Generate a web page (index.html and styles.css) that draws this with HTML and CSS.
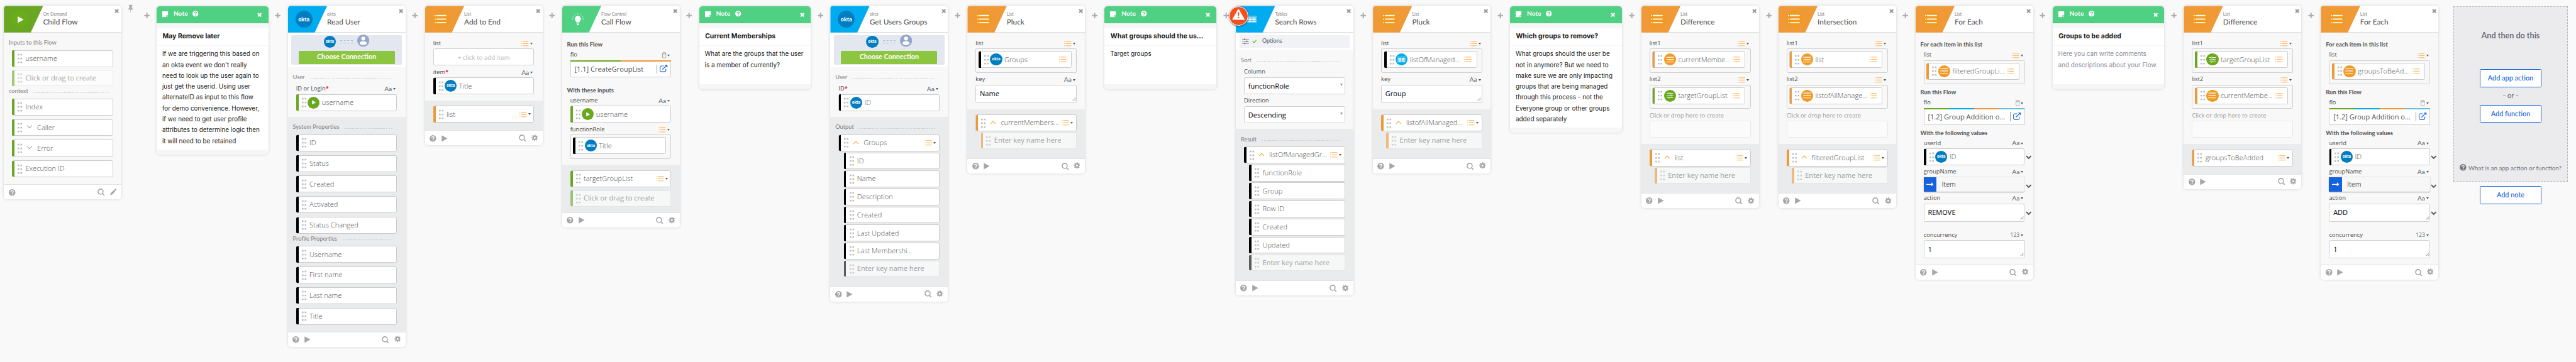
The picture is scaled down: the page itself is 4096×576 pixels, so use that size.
FILE: index.html
```html
<!DOCTYPE html>
<html lang="en">
<head>
<meta charset="utf-8">
<title>Flow editor</title>
<link rel="stylesheet" href="styles.css">
</head>
<body>
<svg class="defs" aria-hidden="true">
  <symbol id="x" viewBox="0 0 10 10"><path d="M1.4 1.4l7.2 7.2M8.6 1.4L1.4 8.6" stroke="currentColor" stroke-width="2.9"/></symbol>
  <symbol id="plus" viewBox="0 0 12 12"><path d="M6 .5v11M.5 6h11" stroke="currentColor" stroke-width="2.6"/></symbol>
  <symbol id="pin" viewBox="0 0 12 17"><path d="M2.4.5h7.2v1.6l-1 .6v4.600c1.600.6 2.900 1.500 2.900 3H.5c0-1.500 1.300-2.400 2.900-3V2.700l-1-.6zM5.400 10.500h1.200L6.200 16h-.4z" fill="currentColor"/></symbol>
  <symbol id="list" viewBox="0 0 15 11"><path d="M0 1h1.600M0 5.500h1.600M0 10h1.600M3 1h11.500M3 5.500h11.500M3 10h11.500" stroke="currentColor" stroke-width="1.200"/></symbol>
  <symbol id="biglist" viewBox="0 0 24 18"><path d="M4.500 2h17.500M4.500 9h17.500M4.500 16h17.500" stroke="#fff" stroke-width="2" stroke-linecap="round"/><circle cx="1.200" cy="2" r="1.200" fill="#fff"/><circle cx="1.200" cy="9" r="1.200" fill="#fff"/><circle cx="1.200" cy="16" r="1.200" fill="#fff"/></symbol>
  <symbol id="play" viewBox="0 0 12 13"><path d="M.3.3L11.700 6.500.3 12.700z" fill="currentColor"/></symbol>
  <symbol id="help" viewBox="0 0 13 13"><circle cx="6.500" cy="6.500" r="6.500" fill="currentColor"/><path d="M4.300 5.100c0-3 4.500-2.900 4.500-.2 0 1.500-2 1.500-2 3.100M6.800 9v1.700" fill="none" stroke="var(--hole,#fff)" stroke-width="1.700"/></symbol>
  <symbol id="search" viewBox="0 0 14 14"><circle cx="6" cy="6" r="4.900" fill="none" stroke="currentColor" stroke-width="1.900"/><path d="M9.600 9.600l3.600 3.600" stroke="currentColor" stroke-width="2.100"/></symbol>
  <symbol id="gear" viewBox="0 0 14 14"><circle cx="7" cy="7" r="3.500" fill="none" stroke="currentColor" stroke-width="2.900"/><circle cx="7" cy="7" r="5.700" fill="none" stroke="currentColor" stroke-width="2.200" stroke-dasharray="2.300 2.177" stroke-dashoffset="1.150"/></symbol>
  <symbol id="pencil" viewBox="0 0 14 14"><path d="M.5 13.500l.8-3.600 6.800-6.800 2.800 2.800-6.800 6.800zM9 2.200L10.500.7c.5-.5 1-.4 1.500 0L13.300 2c.5.5.4 1 0 1.500L11.800 5z" fill="currentColor"/></symbol>
  <symbol id="up" viewBox="0 0 13 8"><path d="M1 7l5.500-5.500L12 7" fill="none" stroke="currentColor" stroke-width="1.500"/></symbol>
  <symbol id="down" viewBox="0 0 13 8"><path d="M1 1l5.500 5.500L12 1" fill="none" stroke="currentColor" stroke-width="1.500"/></symbol>
  <symbol id="thick" viewBox="0 0 12 8"><path d="M1.200 1.200L6 6l4.800-4.800" fill="none" stroke="#555" stroke-width="2.400"/></symbol>
  <symbol id="note" viewBox="0 0 12 12"><path d="M0 0h12v8H8v4H0zM9 9h3l-3 3z" fill="#fff"/></symbol>
  <symbol id="bulb" viewBox="0 0 24 25"><path d="M12 6.500a5.900 5.900 0 0 1 5.900 5.900c0 3.200-2.600 4-3.100 6.600H9.200c-.5-2.600-3.100-3.400-3.100-6.600A5.900 5.900 0 0 1 12 6.500zM9.400 20h5.200v1.300H9.400zM9.800 22.100h4.400v1.100l-1.400 1.400h-1.600l-1.400-1.400z" fill="#fff"/><path d="M12 1v2.700M5.400 3.600l1.700 2M18.600 3.600l-1.700 2M.5 12.200h2.800M20.700 12.200h2.800M1.700 7.300l1.600.7M22.300 7.300l-1.600.7" stroke="#fff" stroke-width="1"/></symbol>
  <symbol id="person" viewBox="0 0 24 24"><circle cx="12" cy="12" r="12" fill="#94a6c9"/><circle cx="12" cy="7.800" r="3.900" fill="#fff"/><path d="M5.200 17c0-5.300 13.600-5.300 13.600 0 0 4.600-13.600 4.600-13.600 0z" fill="#fff"/></symbol>
  <symbol id="cyl" viewBox="0 0 8 12"><path d="M.6 2.200v7.600c0 2.200 6.800 2.200 6.800 0V2.200M.6 2.200c0-2.200 6.800-2.200 6.800 0s-6.800 2.200-6.800 0z" fill="none" stroke="#888" stroke-width="1"/></symbol>
  <symbol id="open" viewBox="0 0 16 15"><path d="M8 2.600H3.200c-1.600 0-2.400.8-2.400 2.400v6.600c0 1.600.8 2.400 2.400 2.400h6.600c1.600 0 2.400-.8 2.400-2.400V8.200" fill="none" stroke="#1662dd" stroke-width="1.400"/><path d="M5.500 9.500L12.500 2.700" stroke="#1662dd" stroke-width="1.700"/><path d="M9.800.4h5.800v5.400z" fill="#1662dd"/></symbol>
  <symbol id="table" viewBox="0 0 18 13"><path d="M.5.5h17v12H.5z" fill="#3fbdf2" stroke="#8fd8f7"/><path d="M2 3h6.500v2.200H2zM9.500 3H16v2.200H9.500zM2 6h6.500v2H2zM9.500 6H16v2H9.500zM2 8.900h6.500V11H2zM9.500 8.900H16V11H9.500z" fill="#fff"/></symbol>
  <symbol id="sliders" viewBox="0 0 14 13"><path d="M0 2h14M0 6.500h14M0 11h14" stroke="currentColor" stroke-width="1.200"/><g fill="var(--knob,currentColor)" stroke="currentColor"><circle cx="5" cy="2" r="1.400"/><circle cx="9.500" cy="6.500" r="1.400"/><circle cx="5" cy="11" r="1.400"/></g></symbol>
  <symbol id="check" viewBox="0 0 9 7"><path d="M1 3.500l2.400 2.300L8 1.200" fill="none" stroke="#7fc12e" stroke-width="2"/></symbol>
  <symbol id="arrow" viewBox="0 0 14 8"><path d="M0 4h12.500M9.500 1l3.300 3-3.300 3" fill="none" stroke="#fff" stroke-width="1.500"/></symbol>
  <symbol id="grip" viewBox="0 0 8 8"><path d="M.5 7.500l7-7M4.500 7.500l3-3" stroke="#444" stroke-width=".9"/></symbol>
  <symbol id="warn" viewBox="0 0 26 23"><path d="M13 1.500L24.500 21.500H1.500z" fill="#fff" stroke="#fff" stroke-width="2" stroke-linejoin="round"/><path d="M11.400 7h3.200l-.6 8h-2zM11.500 16.500h3v2.800h-3z" fill="#f4511e"/></symbol>
</svg>

<main class="flow">

  <section class="card">
    <header class="head green"><div class="logo"><span class="disc"><svg class="i-play"><use href="#play"/></svg></span></div><div class="names"><small>On Demand</small><h2>Child Flow</h2></div><svg class="close"><use href="#x"/></svg></header>
    <div class="in s-first long">
      <div class="sec">Inputs to this Flow</div>
      <div class="pill c-green">username</div>
      <div class="pill c-green create">Click or drag to create</div>
      <div class="sec">context</div>
      <div class="pill c-green">Index</div>
      <div class="pill c-green"><svg class="chev"><use href="#down"/></svg>Caller</div>
      <div class="pill c-green"><svg class="chev"><use href="#down"/></svg>Error</div>
      <div class="pill c-green">Execution ID</div>
    </div>
    <footer class="foot"><svg><use href="#help"/></svg><svg class="f-search"><use href="#search"/></svg><svg class="f-gear"><use href="#pencil"/></svg></footer>
  </section>

  <div class="gap wide"><svg class="pin"><use href="#pin"/></svg><svg class="plus"><use href="#plus"/></svg></div>

  <section class="note">
    <header><svg class="n-icon"><use href="#note"/></svg><b>Note</b><svg class="n-help"><use href="#help"/></svg><svg class="n-close"><use href="#x"/></svg></header>
    <h3>May Remove later</h3>
    <p>If we are triggering this based on<br>an okta event we don't really<br>need to look up the user again to<br>just get the userid. Using user<br>alternateID as input to this flow<br>for demo convenience. However,<br>if we need to get user profile<br>attributes to determine logic then<br>it will need to be retained</p>
  </section>

  <div class="gap"><svg class="plus"><use href="#plus"/></svg></div>

  <section class="card">
    <header class="head blue"><div class="logo"><span class="disc okta">okta</span></div><div class="names"><small>okta</small><h2>Read User</h2></div><svg class="close"><use href="#x"/></svg></header>
    <div class="conn"><div class="conn-box"><div class="conn-icons"><span class="badge okta">okta</span><i class="wire"></i><svg class="person"><use href="#person"/></svg></div><div class="choose">Choose Connection</div></div></div>
    <div class="in s-first">
      <div class="sec">User</div>
      <div class="label">ID or Login<em>*</em><span class="type">Aa</span></div>
      <div class="pill c-green"><span class="badge b-green"><svg class="b-play"><use href="#play"/></svg></span>username</div>
    </div>
    <div class="out s-first long">
      <div class="sec">System Properties</div>
      <div class="pill c-black">ID</div>
      <div class="pill c-black">Status</div>
      <div class="pill c-black">Created</div>
      <div class="pill c-black">Activated</div>
      <div class="pill c-black">Status Changed</div>
      <div class="sec">Profile Properties</div>
      <div class="pill c-black">Username</div>
      <div class="pill c-black">First name</div>
      <div class="pill c-black">Last name</div>
      <div class="pill c-black">Title</div>
    </div>
    <footer class="foot"><svg><use href="#help"/></svg><svg class="f-play"><use href="#play"/></svg><svg class="f-search"><use href="#search"/></svg><svg class="f-gear"><use href="#gear"/></svg></footer>
  </section>

  <div class="gap"><svg class="plus"><use href="#plus"/></svg></div>

  <section class="card">
    <header class="head orange"><div class="logo"><span class="disc"><svg class="i-list"><use href="#biglist"/></svg></span></div><div class="names"><small>List</small><h2>Add to End</h2></div><svg class="close"><use href="#x"/></svg></header>
    <div class="in">
      <div class="label">list<span class="type"><svg class="li"><use href="#list"/></svg></span></div>
      <div class="field placeholder">+ click to add item</div>
      <div class="label">item<em>*</em><span class="type">Aa</span></div>
      <div class="pill c-black"><span class="badge okta">okta</span>Title</div>
    </div>
    <div class="out">
      <div class="pill c-orange">list<span class="type"><svg class="li"><use href="#list"/></svg></span></div>
    </div>
    <footer class="foot"><svg><use href="#help"/></svg><svg class="f-play"><use href="#play"/></svg><svg class="f-search"><use href="#search"/></svg><svg class="f-gear"><use href="#gear"/></svg></footer>
  </section>

  <div class="gap"><svg class="plus"><use href="#plus"/></svg></div>

  <section class="card">
    <header class="head mint"><div class="logo"><span class="disc"><svg class="i-bulb"><use href="#bulb"/></svg></span></div><div class="names"><small>Flow Control</small><h2>Call Flow</h2></div><svg class="close"><use href="#x"/></svg></header>
    <div class="in h-first">
      <h4>Run this Flow</h4>
      <div class="label">flo<span class="type"><svg class="cyl"><use href="#cyl"/></svg></span></div>
      <div class="field ref two">[1.1] CreateGroupList<svg><use href="#open"/></svg></div>
      <h4 class="far">With these inputs</h4>
      <div class="label">username<span class="type">Aa</span></div>
      <div class="pill c-green"><span class="badge b-green"><svg class="b-play"><use href="#play"/></svg></span>username</div>
      <div class="label">functionRole<span class="type"><svg class="li"><use href="#list"/></svg></span></div>
      <div class="slot"><div class="pill c-black"><span class="badge okta">okta</span>Title</div></div>
    </div>
    <div class="out o-create">
      <div class="pill c-green">targetGroupList<span class="type"><svg class="li"><use href="#list"/></svg></span></div>
      <div class="pill c-green create">Click or drag to create</div>
    </div>
    <footer class="foot"><svg><use href="#help"/></svg><svg class="f-play"><use href="#play"/></svg><svg class="f-search"><use href="#search"/></svg><svg class="f-gear"><use href="#gear"/></svg></footer>
  </section>

  <div class="gap"><svg class="plus"><use href="#plus"/></svg></div>

  <section class="note">
    <header><svg class="n-icon"><use href="#note"/></svg><b>Note</b><svg class="n-help"><use href="#help"/></svg><svg class="n-close"><use href="#x"/></svg></header>
    <h3>Current Memberships</h3>
    <p>What are the groups that the user<br>is a member of currently?</p>
  </section>

  <div class="gap"><svg class="plus"><use href="#plus"/></svg></div>

  <section class="card">
    <header class="head blue"><div class="logo"><span class="disc okta">okta</span></div><div class="names"><small>okta</small><h2>Get Users Groups</h2></div><svg class="close"><use href="#x"/></svg></header>
    <div class="conn"><div class="conn-box"><div class="conn-icons"><span class="badge okta">okta</span><i class="wire"></i><svg class="person"><use href="#person"/></svg></div><div class="choose">Choose Connection</div></div></div>
    <div class="in s-first">
      <div class="sec">User</div>
      <div class="label">ID<em>*</em><span class="type">Aa</span></div>
      <div class="pill c-black"><span class="badge okta">okta</span>ID</div>
    </div>
    <div class="out s-first tree">
      <div class="sec">Output</div>
      <div class="pill c-black"><svg class="chev"><use href="#up"/></svg>Groups<span class="type"><svg class="li"><use href="#list"/></svg></span></div>
      <div class="pill c-black kid">ID</div>
      <div class="pill c-black kid">Name</div>
      <div class="pill c-black kid">Description</div>
      <div class="pill c-black kid">Created</div>
      <div class="pill c-black kid">Last Updated</div>
      <div class="pill c-black kid">Last Membershi...</div>
      <div class="pill c-black kid key">Enter key name here</div>
    </div>
    <footer class="foot"><svg><use href="#help"/></svg><svg class="f-play"><use href="#play"/></svg><svg class="f-search"><use href="#search"/></svg><svg class="f-gear"><use href="#gear"/></svg></footer>
  </section>

  <div class="gap"><svg class="plus"><use href="#plus"/></svg></div>

  <section class="card">
    <header class="head orange"><div class="logo"><span class="disc"><svg class="i-list"><use href="#biglist"/></svg></span></div><div class="names"><small>List</small><h2>Pluck</h2></div><svg class="close"><use href="#x"/></svg></header>
    <div class="in">
      <div class="label">list<span class="type"><svg class="li"><use href="#list"/></svg></span></div>
      <div class="slot"><div class="pill c-black"><span class="badge okta">okta</span>Groups<svg class="li end"><use href="#list"/></svg></div></div>
      <div class="label">key<span class="type">Aa</span></div>
      <div class="field area">Name<svg><use href="#grip"/></svg></div>
    </div>
    <div class="out tree">
      <div class="pill c-orange"><svg class="chev"><use href="#up"/></svg>currentMembers...<span class="type"><svg class="li"><use href="#list"/></svg></span></div>
      <div class="pill c-orange kid key">Enter key name here</div>
    </div>
    <footer class="foot"><svg><use href="#help"/></svg><svg class="f-play"><use href="#play"/></svg><svg class="f-search"><use href="#search"/></svg><svg class="f-gear"><use href="#gear"/></svg></footer>
  </section>

  <div class="gap"><svg class="plus"><use href="#plus"/></svg></div>

  <section class="note">
    <header><svg class="n-icon"><use href="#note"/></svg><b>Note</b><svg class="n-help"><use href="#help"/></svg><svg class="n-close"><use href="#x"/></svg></header>
    <h3>What groups should the us...</h3>
    <p>Target groups</p>
  </section>

  <div class="gap"><svg class="plus"><use href="#plus"/></svg></div>

  <section class="card">
    <span class="alert"><svg><use href="#warn"/></svg></span>
    <header class="head blue"><div class="logo"><span class="disc"><svg class="i-table"><use href="#table"/></svg></span></div><div class="names"><small>Tables</small><h2>Search Rows</h2></div><svg class="close"><use href="#x"/></svg></header>
    <div class="opts"><div class="opts-box"><svg class="o-sl"><use href="#sliders"/></svg><svg class="o-ck"><use href="#check"/></svg>Options</div></div>
    <div class="in s-first">
      <div class="sec">Sort</div>
      <div class="label">Column</div>
      <div class="field select">functionRole</div>
      <div class="label">Direction</div>
      <div class="field select">Descending</div>
    </div>
    <div class="out s-first tree">
      <div class="sec">Result</div>
      <div class="pill c-black"><svg class="chev"><use href="#up"/></svg>listOfManagedGr...<span class="type"><svg class="li"><use href="#list"/></svg></span></div>
      <div class="pill c-black kid">functionRole</div>
      <div class="pill c-black kid">Group</div>
      <div class="pill c-black kid">Row ID</div>
      <div class="pill c-black kid">Created</div>
      <div class="pill c-black kid">Updated</div>
      <div class="pill c-black kid key">Enter key name here</div>
    </div>
    <footer class="foot"><svg><use href="#help"/></svg><svg class="f-play"><use href="#play"/></svg><svg class="f-search"><use href="#search"/></svg><svg class="f-gear"><use href="#gear"/></svg></footer>
  </section>

  <div class="gap"><svg class="plus"><use href="#plus"/></svg></div>

  <section class="card">
    <header class="head orange"><div class="logo"><span class="disc"><svg class="i-list"><use href="#biglist"/></svg></span></div><div class="names"><small>List</small><h2>Pluck</h2></div><svg class="close"><use href="#x"/></svg></header>
    <div class="in">
      <div class="label">list<span class="type"><svg class="li"><use href="#list"/></svg></span></div>
      <div class="slot"><div class="pill c-black"><span class="badge b-blue"><svg class="b-table"><use href="#table"/></svg></span>listOfManaged...<svg class="li end"><use href="#list"/></svg></div></div>
      <div class="label">key<span class="type">Aa</span></div>
      <div class="field area">Group<svg><use href="#grip"/></svg></div>
    </div>
    <div class="out tree">
      <div class="pill c-orange"><svg class="chev"><use href="#up"/></svg>listofAllManaged...<span class="type"><svg class="li"><use href="#list"/></svg></span></div>
      <div class="pill c-orange kid key">Enter key name here</div>
    </div>
    <footer class="foot"><svg><use href="#help"/></svg><svg class="f-play"><use href="#play"/></svg><svg class="f-search"><use href="#search"/></svg><svg class="f-gear"><use href="#gear"/></svg></footer>
  </section>

  <div class="gap"><svg class="plus"><use href="#plus"/></svg></div>

  <section class="note">
    <header><svg class="n-icon"><use href="#note"/></svg><b>Note</b><svg class="n-help"><use href="#help"/></svg><svg class="n-close"><use href="#x"/></svg></header>
    <h3>Which groups to remove?</h3>
    <p>What groups should the user be<br>not in anymore? But we need to<br>make sure we are only impacting<br>groups that are being managed<br>through this process - not the<br>Everyone group or other groups<br>added separately</p>
  </section>

  <div class="gap"><svg class="plus"><use href="#plus"/></svg></div>

  <section class="card">
    <header class="head orange"><div class="logo"><span class="disc"><svg class="i-list"><use href="#biglist"/></svg></span></div><div class="names"><small>List</small><h2>Difference</h2></div><svg class="close"><use href="#x"/></svg></header>
    <div class="in">
      <div class="label">list1<span class="type"><svg class="li"><use href="#list"/></svg></span></div>
      <div class="slot"><div class="pill c-orange"><span class="badge b-orange"><svg class="b-list"><use href="#biglist"/></svg></span>currentMembe...<svg class="li end"><use href="#list"/></svg></div></div>
      <div class="label">list2<span class="type"><svg class="li"><use href="#list"/></svg></span></div>
      <div class="slot"><div class="pill c-green"><span class="badge b-green"><svg class="b-sl"><use href="#sliders"/></svg></span>targetGroupList<svg class="li end"><use href="#list"/></svg></div></div>
      <div class="label dim">Click or drop here to create</div>
      <div class="field drop"></div>
    </div>
    <div class="out tree">
      <div class="pill c-orange"><svg class="chev"><use href="#up"/></svg>list<span class="type"><svg class="li"><use href="#list"/></svg></span></div>
      <div class="pill c-orange kid key">Enter key name here</div>
    </div>
    <footer class="foot"><svg><use href="#help"/></svg><svg class="f-play"><use href="#play"/></svg><svg class="f-search"><use href="#search"/></svg><svg class="f-gear"><use href="#gear"/></svg></footer>
  </section>

  <div class="gap"><svg class="plus"><use href="#plus"/></svg></div>

  <section class="card">
    <header class="head orange"><div class="logo"><span class="disc"><svg class="i-list"><use href="#biglist"/></svg></span></div><div class="names"><small>List</small><h2>Intersection</h2></div><svg class="close"><use href="#x"/></svg></header>
    <div class="in">
      <div class="label">list1<span class="type"><svg class="li"><use href="#list"/></svg></span></div>
      <div class="slot"><div class="pill c-orange"><span class="badge b-orange"><svg class="b-list"><use href="#biglist"/></svg></span>list<svg class="li end"><use href="#list"/></svg></div></div>
      <div class="label">list2<span class="type"><svg class="li"><use href="#list"/></svg></span></div>
      <div class="slot"><div class="pill c-orange"><span class="badge b-orange"><svg class="b-list"><use href="#biglist"/></svg></span>listofAllManage...<svg class="li end"><use href="#list"/></svg></div></div>
      <div class="label dim">Click or drop here to create</div>
      <div class="field drop"></div>
    </div>
    <div class="out tree">
      <div class="pill c-orange"><svg class="chev"><use href="#up"/></svg>filteredGroupList<span class="type"><svg class="li"><use href="#list"/></svg></span></div>
      <div class="pill c-orange kid key">Enter key name here</div>
    </div>
    <footer class="foot"><svg><use href="#help"/></svg><svg class="f-play"><use href="#play"/></svg><svg class="f-search"><use href="#search"/></svg><svg class="f-gear"><use href="#gear"/></svg></footer>
  </section>

  <div class="gap"><svg class="plus"><use href="#plus"/></svg></div>

  <section class="card">
    <header class="head orange"><div class="logo"><span class="disc"><svg class="i-list"><use href="#biglist"/></svg></span></div><div class="names"><small>List</small><h2>For Each</h2></div><svg class="close"><use href="#x"/></svg></header>
    <div class="in h-first">
      <h4>For each item in this list</h4>
      <div class="label">list<span class="type"><svg class="li"><use href="#list"/></svg></span></div>
      <div class="slot"><div class="pill c-orange"><span class="badge b-orange"><svg class="b-list"><use href="#biglist"/></svg></span>filteredGroupLi...<svg class="li end"><use href="#list"/></svg></div></div>
      <h4>Run this Flow</h4>
      <div class="label">flo<span class="type"><svg class="cyl"><use href="#cyl"/></svg></span></div>
      <div class="field ref four">[1.2] Group Addition o...<svg><use href="#open"/></svg></div>
      <h4>With the following values</h4>
      <div class="label">userId<span class="type">Aa</span></div>
      <div class="row"><div class="pill c-black"><span class="badge okta">okta</span>ID</div><svg class="more"><use href="#thick"/></svg></div>
      <div class="label">groupName<span class="type">Aa</span></div>
      <div class="row"><div class="item"><span><svg><use href="#arrow"/></svg></span>Item</div><svg class="more low"><use href="#thick"/></svg></div>
      <div class="label">action<span class="type">Aa</span></div>
      <div class="row"><div class="field area">REMOVE<svg><use href="#grip"/></svg></div><svg class="more"><use href="#thick"/></svg></div>
      <div class="label far">concurrency<span class="type num">123</span></div>
      <div class="field area">1<svg><use href="#grip"/></svg></div>
    </div>
    <footer class="foot"><svg><use href="#help"/></svg><svg class="f-play"><use href="#play"/></svg><svg class="f-search"><use href="#search"/></svg><svg class="f-gear"><use href="#gear"/></svg></footer>
  </section>

  <div class="gap"><svg class="plus"><use href="#plus"/></svg></div>

  <section class="note">
    <header><svg class="n-icon"><use href="#note"/></svg><b>Note</b><svg class="n-help"><use href="#help"/></svg><svg class="n-close"><use href="#x"/></svg></header>
    <h3>Groups to be added</h3>
    <p class="hint">Here you can write comments<br>and descriptions about your Flow.</p>
  </section>

  <div class="gap"><svg class="plus"><use href="#plus"/></svg></div>

  <section class="card">
    <header class="head orange"><div class="logo"><span class="disc"><svg class="i-list"><use href="#biglist"/></svg></span></div><div class="names"><small>List</small><h2>Difference</h2></div><svg class="close"><use href="#x"/></svg></header>
    <div class="in">
      <div class="label">list1<span class="type"><svg class="li"><use href="#list"/></svg></span></div>
      <div class="slot"><div class="pill c-green"><span class="badge b-green"><svg class="b-sl"><use href="#sliders"/></svg></span>targetGroupList<svg class="li end"><use href="#list"/></svg></div></div>
      <div class="label">list2<span class="type"><svg class="li"><use href="#list"/></svg></span></div>
      <div class="slot"><div class="pill c-orange"><span class="badge b-orange"><svg class="b-list"><use href="#biglist"/></svg></span>currentMembe...<svg class="li end"><use href="#list"/></svg></div></div>
      <div class="label dim">Click or drop here to create</div>
      <div class="field drop"></div>
    </div>
    <div class="out">
      <div class="pill c-orange">groupsToBeAdded<span class="type"><svg class="li"><use href="#list"/></svg></span></div>
    </div>
    <footer class="foot"><svg><use href="#help"/></svg><svg class="f-play"><use href="#play"/></svg><svg class="f-search"><use href="#search"/></svg><svg class="f-gear"><use href="#gear"/></svg></footer>
  </section>

  <div class="gap"><svg class="plus"><use href="#plus"/></svg></div>

  <section class="card">
    <header class="head orange"><div class="logo"><span class="disc"><svg class="i-list"><use href="#biglist"/></svg></span></div><div class="names"><small>List</small><h2>For Each</h2></div><svg class="close"><use href="#x"/></svg></header>
    <div class="in h-first">
      <h4>For each item in this list</h4>
      <div class="label">list<span class="type"><svg class="li"><use href="#list"/></svg></span></div>
      <div class="slot"><div class="pill c-orange"><span class="badge b-orange"><svg class="b-list"><use href="#biglist"/></svg></span>groupsToBeAd...<svg class="li end"><use href="#list"/></svg></div></div>
      <h4>Run this Flow</h4>
      <div class="label">flo<span class="type"><svg class="cyl"><use href="#cyl"/></svg></span></div>
      <div class="field ref four">[1.2] Group Addition o...<svg><use href="#open"/></svg></div>
      <h4>With the following values</h4>
      <div class="label">userId<span class="type">Aa</span></div>
      <div class="row"><div class="pill c-black"><span class="badge okta">okta</span>ID</div><svg class="more"><use href="#thick"/></svg></div>
      <div class="label">groupName<span class="type">Aa</span></div>
      <div class="row"><div class="item"><span><svg><use href="#arrow"/></svg></span>Item</div><svg class="more low"><use href="#thick"/></svg></div>
      <div class="label">action<span class="type">Aa</span></div>
      <div class="row"><div class="field area">ADD<svg><use href="#grip"/></svg></div><svg class="more"><use href="#thick"/></svg></div>
      <div class="label far">concurrency<span class="type num">123</span></div>
      <div class="field area">1<svg><use href="#grip"/></svg></div>
    </div>
    <footer class="foot"><svg><use href="#help"/></svg><svg class="f-play"><use href="#play"/></svg><svg class="f-search"><use href="#search"/></svg><svg class="f-gear"><use href="#gear"/></svg></footer>
  </section>

  <aside class="next">
    <div class="next-box">
      <h5>And then do this</h5>
      <button>Add app action</button>
      <span class="or">- or -</span>
      <button>Add function</button>
      <div class="what"><svg><use href="#help"/></svg>What is an app action or function?</div>
    </div>
    <button>Add note</button>
  </aside>

</main>
</body>
</html>
```
FILE: styles.css
```css
* { box-sizing: border-box; }
html, body { margin: 0; background: #f9f9f9; }
body { overflow: hidden; width: 4096px; height: 576px; }
svg { display: block; flex: none; overflow: visible; }
.defs { position: absolute; width: 0; height: 0; }
h2, h3, h4, h5, p { margin: 0; }

.flow {
  zoom: 0.81953;
  display: flex;
  align-items: flex-start;
  width: 4998px;
  height: 703px;
  padding: 11.500px 0 0 7.600px;
  font-family: "Open Sans", "Noto Sans", sans-serif;
}
.gap { flex: none; width: 38px; display: flex; justify-content: center; padding-top: 12.300px; color: #acacac; }
.gap.wide { width: 68.300px; justify-content: flex-end; padding-right: 13.200px; gap: 20.500px; }
.plus { width: 11.500px; height: 11.500px; }
.pin { width: 11.500px; height: 17px; margin-top: -15px; }

/* Cards */
.card { position: relative; flex: none; width: 228px; border-radius: 6px; background: #f8f8f8; box-shadow: 0 0 5px rgba(0,0,0,.16); }
.head { display: flex; position: relative; height: 52px; background: #fff; border-bottom: 1px solid #dedede; border-radius: 6px 6px 0 0; }
.logo { width: 76px; height: 51.500px; background: var(--bg); border-top-left-radius: 6px; clip-path: polygon(0 0, 100% 0, 68.500% 100%, 0 100%); padding: 9.500px 0 0 14.500px; }
.green { --bg: #69a723; --disc: #69ad1c; }
.blue { --bg: #00abf0; --disc: #00abf0; }
.orange { --bg: #ef9937; --disc: #f19a22; }
.mint { --bg: #4fd083; --disc: #4fd083; }
.disc { display: flex; align-items: center; justify-content: center; width: 33px; height: 33px; border-radius: 50%; background: var(--disc); }
.okta { background: #007dc1; color: #fff; font-weight: 700; letter-spacing: -.2px; }
.disc.okta { font-size: 10px; padding-bottom: 1px; }
.i-play { width: 12px; height: 15px; margin-left: 4px; color: #fff; }
.i-list { width: 24px; height: 18px; }
.i-bulb { width: 24px; height: 25px; margin-left: -1px; }
.i-table { width: 19px; height: 14px; }
.names { padding-top: 10px; color: #5a5a5a; font-family: Lato, "Open Sans", sans-serif; }
.names small { display: block; font-size: 8.700px; line-height: 13px; color: #8a8a8a; }
.names h2 { font-size: 14.400px; line-height: 16.500px; font-weight: 500; white-space: nowrap; }
.close { position: absolute; right: 4px; top: 5.500px; width: 9px; height: 9px; color: #999; }

.in, .out { padding: 11.800px 16px 11.700px 15.800px; }
.in.s-first, .out.s-first { padding-top: 10px; }
.in.h-first { padding-top: 15px; }
.in.long, .out.long { padding-bottom: 14px; }
.out { background: #eaebed; padding-top: 10.500px; padding-bottom: 14.700px; }
.out.tree { padding-bottom: 18.500px; }
.out.o-create { padding-bottom: 11.700px; }

.sec { display: flex; height: 23.800px; margin: 0 9px 0 -6.300px; font: 500 11.300px/18.400px Lato, "Open Sans", sans-serif; color: #888; white-space: nowrap; }
.sec::after { content: ""; flex: 1; height: 1px; margin: 11.500px 0 0 10px; background: repeating-linear-gradient(90deg, #cfcfcf 0 3px, transparent 3px 5px); }
.in h4 { height: 19.500px; margin: 7.200px 0 0 -6.300px; font: 900 11.400px/17.400px Lato, "Open Sans", sans-serif; color: #616161; white-space: nowrap; }
.in h4:first-child { margin-top: 0; }
.in h4.far { margin-top: 17px; }
.label { display: flex; height: 19px; margin-top: 4.300px; font-size: 11.350px; line-height: 18px; color: #4a4a4a; white-space: nowrap; }
.label:first-child, h4 + .label, .sec + .label { margin-top: 0; }
.row + .label { margin-top: 3.700px; }
.in .label.far { margin-top: 17.200px; }
.label em { color: #f00; font-style: normal; font-weight: 600; }
.label.dim { color: #999; }
.type { display: flex; align-items: center; gap: 2.500px; margin-left: auto; padding-right: 2.700px; color: #606a75; font: 500 12.500px/17px Lato, "Open Sans", sans-serif; }
.type.num { font: 400 10.500px/17px "Open Sans", sans-serif; }
.type::after { content: ""; border: 3px solid transparent; border-top: 4px solid #555; border-bottom: 0; }
.li { width: 14.500px; height: 10.600px; color: #ffa83c; }
.cyl { width: 8px; height: 12px; }

/* Draggable values */
.pill { position: relative; display: flex; align-items: center; height: 32.800px; padding-left: 24.800px; border: 1px solid #cbcbcb; border-radius: 3px; background: #fff; font-size: 13.500px; font-weight: 300; color: #505050; white-space: nowrap; line-height: 20px; }
.pill::before { content: ""; position: absolute; left: -1px; top: -.5px; bottom: -.5px; width: 4.500px; background: var(--bar); border-radius: 2px 0 0 2px; }
.pill::after { content: ""; position: absolute; left: 8.500px; top: 50%; width: 11px; height: 22.200px; margin-top: -11px; background: radial-gradient(circle at 50% 50%, #bdbdbd 1.500px, transparent 2px) 0 0 / 5.500px 7.400px; }
.c-green { --bar: #69a723; }
.c-black { --bar: #000; }
.c-orange { --bar: #ef9937; }
.pill + .pill { margin-top: 7.200px; }
.pill + .pill.create { margin-top: 6px; height: 31.500px; }
.pill + .pill.kid { margin: 2.200px 0 0 10px; }
.pill.create, .pill.key { opacity: .6; border-color: #e2e2e2; font-weight: 400; color: #6b6b6b; }
.pill + .pill.key { height: 31.500px; }
.pill .type { padding-right: 6px; }
.pill .end { margin-left: auto; margin-right: 9px; }
.chev { width: 12px; height: 7px; margin: -2px 8.500px 0 2.200px; color: #aaa; }
.tree .chev { color: #ffa83c; }
.badge { display: flex; align-items: center; justify-content: center; width: 23.400px; height: 23.400px; border-radius: 50%; flex: none; }
.pill .badge { margin: 0 4.200px 0 -3.500px; }
.badge.okta { font-size: 7.500px; padding-bottom: .5px; line-height: 10px; }
.b-green { background: #69a81c; color: #fff; --knob: #69a81c; }
.b-orange { background: #f29a26; }
.b-blue { background: #00abf0; }
.b-play { width: 8px; height: 9.500px; margin-left: 2px; }
.b-list { width: 16px; height: 12px; }
.b-table { width: 16px; height: 11.500px; }
.b-sl { width: 13px; height: 12px; }
.slot { height: 47px; padding: 3.800px 8.800px 0 4.400px; border: 1px solid #cfcfcf; border-radius: 3px; }

/* Inputs */
.field { position: relative; display: flex; align-items: center; height: 33px; padding-left: 7px; border: 1px solid #cfcfcf; border-radius: 3px; background: #fff; font-size: 13.450px; color: #000; white-space: nowrap; }
.field.placeholder { justify-content: center; padding: 0; color: #b5b5b5; font-size: 12px; }
.field.area { height: 35.500px; padding-bottom: 2px; }
.area svg { position: absolute; right: 1px; bottom: 3px; width: 7px; height: 7px; }
.field.drop { background: #fbfbfb; border-color: #e8e8e8; }
.select::after { content: ""; margin: -3px 4px 0 auto; border: 2.800px solid transparent; border-top: 5px solid #999; border-bottom: 0; }
.field.ref { color: #505050; border-top: 0; border-radius: 0 0 2px 2px; padding-top: 2.500px; }
.ref::before { content: ""; position: absolute; left: -1px; right: -1px; top: 0; height: 2.500px; }
.two::before { background: linear-gradient(90deg, #69a723 50%, #ef9937 50%); }
.four::before { background: linear-gradient(90deg, #69a723 25%, #00abe8 25% 50%, #ef9937 50% 75%, #67bfdf 75%); }
.ref::after { content: ""; order: 1; width: 1px; height: 18px; margin: 0 4.500px 0 auto; background: #999; }
.ref svg { order: 2; width: 15.500px; height: 14.500px; margin: -3px 6px 0 0; }
.row { display: flex; align-items: center; margin-right: -14px; }
.row > div { width: 196.200px; flex: none; }
.more { width: 11.500px; height: 8px; margin: 2px 0 0 1.500px; }
.more.low { margin-top: 7px; }
.item { display: flex; align-items: center; height: 28.500px; background: #f7f7f7; border-radius: 2px; box-shadow: 0 1px 2px rgba(0,0,0,.35); font-size: 13px; color: #555; }
.item span { display: flex; align-items: center; justify-content: center; width: 25px; height: 100%; margin-right: 10px; background: #1662dd; }
.item svg { width: 14px; height: 8px; }

/* Connection and options strips */
.conn { height: 66.500px; padding: 4.500px 7px 0; background: #fff; }
.conn-box { height: 58px; background: #e3e7ef; border-radius: 2px; padding: .5px 13.500px 0; }
.conn-icons { display: flex; align-items: flex-start; height: 30px; padding-left: 49px; }
.conn-icons .okta { margin-top: 1px; }
.wire { width: 24px; height: 6px; margin: 10px 9px 0 9px; border: dashed #aebcd6; border-width: 1px 0; }
.person { width: 23.500px; height: 23.500px; margin-top: -1.500px; }
.choose { height: 25.500px; background: #8cc640; border-radius: 2px; color: #fff; text-align: center; font: 700 13.200px/22.500px Lato, "Open Sans", sans-serif; }
.opts { height: 33.500px; padding: 4.500px 7px 0; background: #fff; }
.opts-box { display: flex; align-items: center; height: 24.700px; padding: 0 0 2px 5.500px; background: #f1f2f6; font: 500 11px/20px Lato, "Open Sans", sans-serif; color: #666; }
.o-sl { width: 13.500px; height: 12px; margin-top: 3px; color: #888; }
.o-ck { width: 9px; height: 7px; margin: 2px 10.500px 0 5.500px; }
.alert { position: absolute; z-index: 2; left: -14px; top: .5px; width: 38px; height: 38px; border-radius: 50%; border: 2px solid #fff; background: #f4511e; box-shadow: 0 1px 3px rgba(0,0,0,.5); display: flex; justify-content: center; padding-top: 4px; }
.alert svg { width: 25px; height: 22px; }

.foot { display: flex; align-items: center; height: 29.300px; padding: 0 9px; background: #fff; border-top: 1px solid #e3e3e3; border-radius: 0 0 6px 6px; color: #a6a6a6; }
.foot svg { width: 13px; height: 13px; }
.foot .f-play { width: 12px; height: 13px; margin-left: 9.500px; }
.foot .f-search { width: 14px; height: 14px; margin-left: auto; }
.foot .f-gear { margin: -2px 0 0 10px; }

/* Notes */
.note { flex: none; width: 216.700px; margin-top: .5px; padding-bottom: 9.500px; border-radius: 6px; background: #f6f6f6; box-shadow: 0 0 5px rgba(0,0,0,.16); font-family: Inter, "Open Sans", sans-serif; color: #1d1d21; }
.note header { display: flex; height: 32.800px; margin-bottom: 9.300px; padding-left: 11px; background: #4fd083; border-radius: 6px 6px 0 0; color: #fff; --hole: #4fd083; }
.n-icon { width: 11.500px; height: 11.500px; margin-top: 10.500px; }
.note b { margin: 5.500px 0 0 10.300px; width: 37px; font: 700 12.500px/18px Lato, "Open Sans", sans-serif; }
.n-help { width: 11.500px; height: 11.500px; margin-top: 8.700px; }
.n-close { width: 9px; height: 9px; margin: 12.500px 12px 0 auto; }
.note h3 { height: 34.500px; padding: 0 11.500px; background: #fff; border-bottom: 1px solid #f6f6f6; font-size: 12.800px; line-height: 35px; font-weight: 700; white-space: nowrap; }
.note p { min-height: 75px; padding: 5.700px 10.800px 6.300px; background: #fff; font-size: 12.100px; line-height: 21.100px; white-space: nowrap; }
.note .hint { color: #8c8c96; }

/* Next step */
.next { flex: none; width: 223px; margin: .5px 0 0 28.500px; display: flex; flex-direction: column; align-items: center; font-family: Lato, "Open Sans", sans-serif; }
.next-box { width: 223px; height: 341px; margin-bottom: 8.500px; background: #ebebed; border: 1px dashed #b4b4b4; display: flex; flex-direction: column; align-items: center; }
.next h5 { margin: 45px 0 54.500px; font-size: 15.400px; line-height: 22px; color: #6e6e78; }
.next button { width: 119px; height: 35px; padding: 0 0 2px; background: #fff; border: 1px solid #1662dd; border-radius: 2px; color: #1662dd; font: 500 13.300px Lato, "Open Sans", sans-serif; }
.or { height: 33.500px; line-height: 32px; font-size: 14px; color: #666; }
.what { display: flex; align-items: center; gap: 4px; margin-top: 80px; font-size: 12px; line-height: 17px; color: #77777f; white-space: nowrap; --hole: #ebebed; }
.what svg { width: 13px; height: 13px; margin-top: -3px; }
```
